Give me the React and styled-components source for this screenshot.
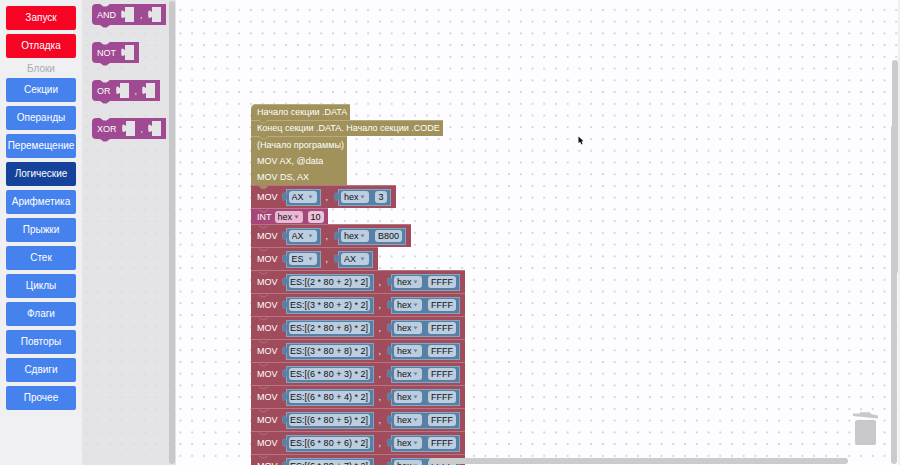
import React from 'react';
import styled, { createGlobalStyle } from 'styled-components';

const GlobalStyle = createGlobalStyle`
  * { box-sizing: border-box; }
  body { margin: 0; background: #fdfcfe; font-family: "Liberation Sans", Arial, sans-serif; }
`;

const OLIVE = '#a0925a';
const RED = '#a04c5c';
const PINK = '#a54778';
const BLUE = '#5680a6';
const PURPLE = '#a04a94';

const Page = styled.div`
  display: grid;
  grid-template-columns: 82px minmax(0, 1fr);
  height: 100vh;
  overflow: hidden;
`;

const Sidebar = styled.nav`
  display: flex;
  flex-direction: column;
  gap: 4px;
  padding: 6px;
  background: #f0eff1;
`;

const buttonColors = { run: '#f50424', block: '#4682ee', active: '#15429a' };

const SideButton = styled.button`
  height: 24px;
  flex: none;
  padding: 0;
  border: 0;
  border-radius: 2px;
  background: ${(p) => buttonColors[p.$kind]};
  color: #fff;
  font: 10px/24px "Liberation Sans", Arial, sans-serif;
  text-align: center;
  white-space: nowrap;
`;

const SideTitle = styled.h2`
  margin: 2px 0 0;
  color: #a9adb5;
  font: 400 10px/10px "Liberation Sans", Arial, sans-serif;
  text-align: center;
`;

const Workspace = styled.main`
  position: relative;
  display: flex;
  min-width: 0;
  overflow: hidden;
  border-right: 2px solid #efeef0;
`;

const Dots = styled.svg`
  position: absolute;
  inset: 0;
  width: 100%;
  height: 100%;
`;

const Flyout = styled.aside`
  position: relative;
  display: flex;
  justify-content: space-between;
  flex: none;
  width: 94px;
  padding: 0 1px 0 10px;
  background: rgba(221, 220, 222, 0.8);
`;

const FlyoutList = styled.div`
  display: flex;
  flex-direction: column;
  align-items: flex-start;
  gap: 17px;
  padding-top: 4px;
`;

const FlyoutScroll = styled.div`
  width: 6px;
  margin: 1px 0;
  border-radius: 3px;
  background: #c8c7ca;
`;

const FlyoutBlock = styled.div`
  position: relative;
  display: flex;
  align-items: center;
  height: 21px;
  padding: 0 5px;
  border-radius: 4px 0 0 4px;
  background: ${PURPLE};
  color: #fff;
  font-size: 9px;
  line-height: 20px;
  white-space: nowrap;
`;

const NotchTop = styled.svg`
  position: absolute;
  left: 8px;
  top: 0;
`;

const NotchBottom = styled.svg`
  position: absolute;
  left: 8px;
  top: 100%;
`;

const Socket = styled.svg`
  flex: none;
  margin: 0 0 0 5px;
`;

const FlyoutComma = styled.span`
  margin-left: 6px;
`;

const Canvas = styled.div`
  position: absolute;
  left: 169px;
  top: 104px;
`;

const Stack = styled.div`
  display: flex;
  flex-direction: column;
  align-items: flex-start;
  color: #fff;
  font-size: 9px;
  white-space: nowrap;
`;

const Block = styled.section`
  position: relative;
  padding: 0 3px 0 6px;
  border-top: 1px solid ${(p) => p.$edge};
  border-radius: ${(p) => (p.$first ? '5px 0 0 0' : '0')};
  background: ${(p) => p.$color};
`;

const TextBlock = styled(Block)`
  padding-top: ${(p) => (p.$tall ? '1px' : '0')};
  line-height: 16px;
  border-top: 0;
  box-shadow: inset 0 1px 0 ${(p) => p.$edge};
`;

const Line = styled.div`
  height: 16px;
`;

const CommandBlock = styled(Block)`
  display: flex;
  align-items: center;
  height: ${(p) => (p.$short ? '16px' : '23px')};
  padding-right: ${(p) => (p.$short ? '4px' : '5px')};
`;

const Value = styled.div`
  position: relative;
  display: flex;
  align-items: center;
  gap: 6px;
  height: 17px;
  margin-left: ${(p) => (p.$second ? '10px' : '8px')};
  padding: 0 3px 0 2px;
  background: ${BLUE};
  border: 1px solid #86a6c0;
`;

const Tab = styled.svg`
  position: absolute;
  left: -5px;
  top: 2px;
`;

const Comma = styled.span`
  margin-left: 5px;
`;

const chip = `
  height: 12px;
  border: 0;
  border-radius: 3px;
  color: #111;
  font: 9px/12px "Liberation Sans", Arial, sans-serif;
`;

const SelectWrap = styled.span`
  position: relative;
  display: flex;
  margin-left: ${(p) => (p.$pink ? '3px' : '0')};
`;

const Select = styled.select`
  ${chip}
  appearance: none;
  width: 28px;
  padding: 0 0 0 3px;
  background: ${(p) => (p.$pink ? '#e9b9d2' : '#bccde0')};
`;

const Arrow = styled.svg`
  position: absolute;
  right: 4px;
  top: 4px;
  pointer-events: none;
`;

const Input = styled.input`
  ${chip}
  width: ${(p) => p.$w}px;
  padding: 0;
  text-align: center;
  margin-left: ${(p) => (p.$pink ? '5px' : '0')};
  background: ${(p) => (p.$pink ? '#e9c3d8' : '#bccde0')};
`;

const Trash = styled.button`
  position: absolute;
  right: 20px;
  bottom: 20px;
  width: 25px;
  height: 33px;
  padding: 0;
  border: 0;
  background: none;
`;

const Scrollbar = styled.div`
  position: absolute;
  border-radius: 3px;
  background: #cbcacc;
`;

const ScrollX = styled(Scrollbar)`
  left: 347px;
  right: 50px;
  bottom: 1px;
  height: 6px;
`;

const ScrollY = styled(Scrollbar)`
  right: 1px;
  top: 125px;
  bottom: 1px;
  width: 6px;
`;

const PageScroll = styled(Scrollbar)`
  right: 0;
  top: 60px;
  height: 214px;
  width: 6px;
`;

const Cursor = styled.svg`
  position: absolute;
  left: 496px;
  top: 136px;
`;

function Dropdown({ value, pink, label }) {
  return (
    <SelectWrap $pink={pink}>
      <Select $pink={pink} defaultValue={value} aria-label={label}>
        <option>{value}</option>
      </Select>
      <Arrow width="5" height="4" viewBox="0 0 5 4"><path d="M0.5 0.5h4L2.5 3.5z" fill={pink ? '#a54778' : '#6384a5'} /></Arrow>
    </SelectWrap>
  );
}

function ValueBlock({ second, children }) {
  return (
    <Value $second={second}>
      <Tab width="5" height="10" viewBox="0 0 5 10">
        <path d="M5 1.5H4C3 1.5 3 .8 1.5 .8C.6 .8 .5 2 .5 4.5S.6 8.5 1.5 8.5C3 8.5 3 7.5 4 7.5H5z" fill={BLUE} stroke="#7797b2" strokeWidth=".5" />
      </Tab>
      {children}
    </Value>
  );
}

function Joint({ color, edge }) {
  return (
    <NotchTop width="10" height="4" viewBox="0 0 10 4">
      <path d="M0 0L3 2.600H6L9 0z" fill={color} />
      <path d="M0 .5L3 2.800H6L9 .5" fill="none" stroke={edge} strokeWidth=".8" />
    </NotchTop>
  );
}

const R_EDGE = '#b9757f';
const O_EDGE = '#b7ac80';

function Hex({ value, w }) {
  return (
    <ValueBlock second>
      <Dropdown value="hex" label="Система счисления" />
      <Input defaultValue={value} $w={w} aria-label="Число" />
    </ValueBlock>
  );
}

function Mov({ prev = RED, left, right }) {
  return (
    <CommandBlock $color={RED} $edge={R_EDGE}>
      <Joint color={prev} edge={R_EDGE} />
      MOV
      <ValueBlock>{left}</ValueBlock>
      <Comma>,</Comma>
      {right}
    </CommandBlock>
  );
}

const reg = (name) => <Dropdown value={name} label="Регистр" />;

const cells = ['2 * 80 + 2', '3 * 80 + 2', '2 * 80 + 8', '3 * 80 + 8', '6 * 80 + 3', '6 * 80 + 4', '6 * 80 + 5', '6 * 80 + 6', '6 * 80 + 7'];

const categories = ['Секции', 'Операнды', 'Перемещение', 'Логические', 'Арифметика', 'Прыжки', 'Стек', 'Циклы', 'Флаги', 'Повторы', 'Сдвиги', 'Прочее'];

const operators = [['AND', 2], ['NOT', 1], ['OR', 2], ['XOR', 2]];

function EmptySocket() {
  return (
    <Socket width="13" height="15" viewBox="0 0 13 15">
      <path d="M4 0H13V15H4V10C3 10 2.800 11 1.500 11C.4 11 .2 10 .2 7S.4 3.500 1.500 3.500C2.800 3.500 3 5 4 5z" fill="#e4e3e5" />
    </Socket>
  );
}

export default function App() {
  return (
    <>
      <GlobalStyle />
      <Page>
        <Sidebar>
          <SideButton $kind="run">Запуск</SideButton>
          <SideButton $kind="run">Отладка</SideButton>
          <SideTitle>Блоки</SideTitle>
          {categories.map((c) => (
            <SideButton key={c} $kind={c === 'Логические' ? 'active' : 'block'}>{c}</SideButton>
          ))}
        </Sidebar>
        <Workspace>
          <Dots aria-hidden="true">
            <defs>
              <pattern id="dots" x="-.3" y="-2.9" width="11.735" height="11.735" patternUnits="userSpaceOnUse">
                <rect x="4" y="0.3" width="1.7" height="1.7" fill="#c9c8cc" />
              </pattern>
            </defs>
            <rect width="100%" height="100%" fill="url(#dots)" />
          </Dots>
          <Canvas>
            <Stack>
              <TextBlock $first $color={OLIVE} $edge={O_EDGE}>Начало секции .DATA</TextBlock>
              <TextBlock $color={OLIVE} $edge={O_EDGE}>
                <Joint color={OLIVE} edge={O_EDGE} />
                Конец секции .DATA. Начало секции .CODE
              </TextBlock>
              <TextBlock $tall $color={OLIVE} $edge={O_EDGE}>
                <Joint color={OLIVE} edge={O_EDGE} />
                <Line>(Начало программы)</Line>
                <Line>MOV AX, @data</Line>
                <Line>MOV DS, AX</Line>
              </TextBlock>
              <Mov prev={OLIVE} left={reg('AX')} right={<Hex value="3" w={12} />} />
              <CommandBlock $short $color={PINK} $edge="#bd7598">
                <Joint color={RED} edge="#bd7598" />
                INT
                <Dropdown value="hex" pink label="Система счисления" />
                <Input defaultValue="10" $w={16} $pink aria-label="Номер прерывания" />
              </CommandBlock>
              <Mov prev={PINK} left={reg('AX')} right={<Hex value="B800" w={27} />} />
              <Mov left={reg('ES')} right={<ValueBlock second>{reg('AX')}</ValueBlock>} />
              {cells.map((c) => (
                <Mov
                  key={c}
                  left={<Input defaultValue={`ES:[(${c}) * 2]`} $w={81} aria-label="Адрес" />}
                  right={<Hex value="FFFF" w={28} />}
                />
              ))}
            </Stack>
          </Canvas>
          <Flyout>
            <FlyoutList>
              {operators.map(([name, count]) => (
                <FlyoutBlock key={name}>
                  <NotchTop width="10" height="3" viewBox="0 0 10 3"><path d="M0 0L3.500 2.500H6.500L10 0z" fill="#e4e3e5" /></NotchTop>
                  {name}
                  <EmptySocket />
                  {count === 2 && <FlyoutComma>,</FlyoutComma>}
                  {count === 2 && <EmptySocket />}
                  <NotchBottom width="10" height="3" viewBox="0 0 10 3"><path d="M0 0L3.500 2.500H6.500L10 0z" fill={PURPLE} /></NotchBottom>
                </FlyoutBlock>
              ))}
            </FlyoutList>
            <FlyoutScroll />
          </Flyout>
          <Trash aria-label="Корзина">
            <svg width="25" height="33" viewBox="0 0 25 33">
              <path d="M0 1.500L7 1.500V.3L17 .3L18 2L25 3.500V6.500L0 4z" fill="#c8c7c9" />
              <rect x="2" y="8" width="21" height="25" rx="2" fill="#c8c7c9" />
            </svg>
          </Trash>
          <ScrollX />
          <ScrollY />
          <PageScroll />
          <Cursor width="6" height="9" viewBox="0 0 6 9"><path d="M.5 .5V7L2 5.800L3.500 8.500L4.500 8L3.500 5.300H5.500z" fill="#111" /></Cursor>
        </Workspace>
      </Page>
    </>
  );
}
